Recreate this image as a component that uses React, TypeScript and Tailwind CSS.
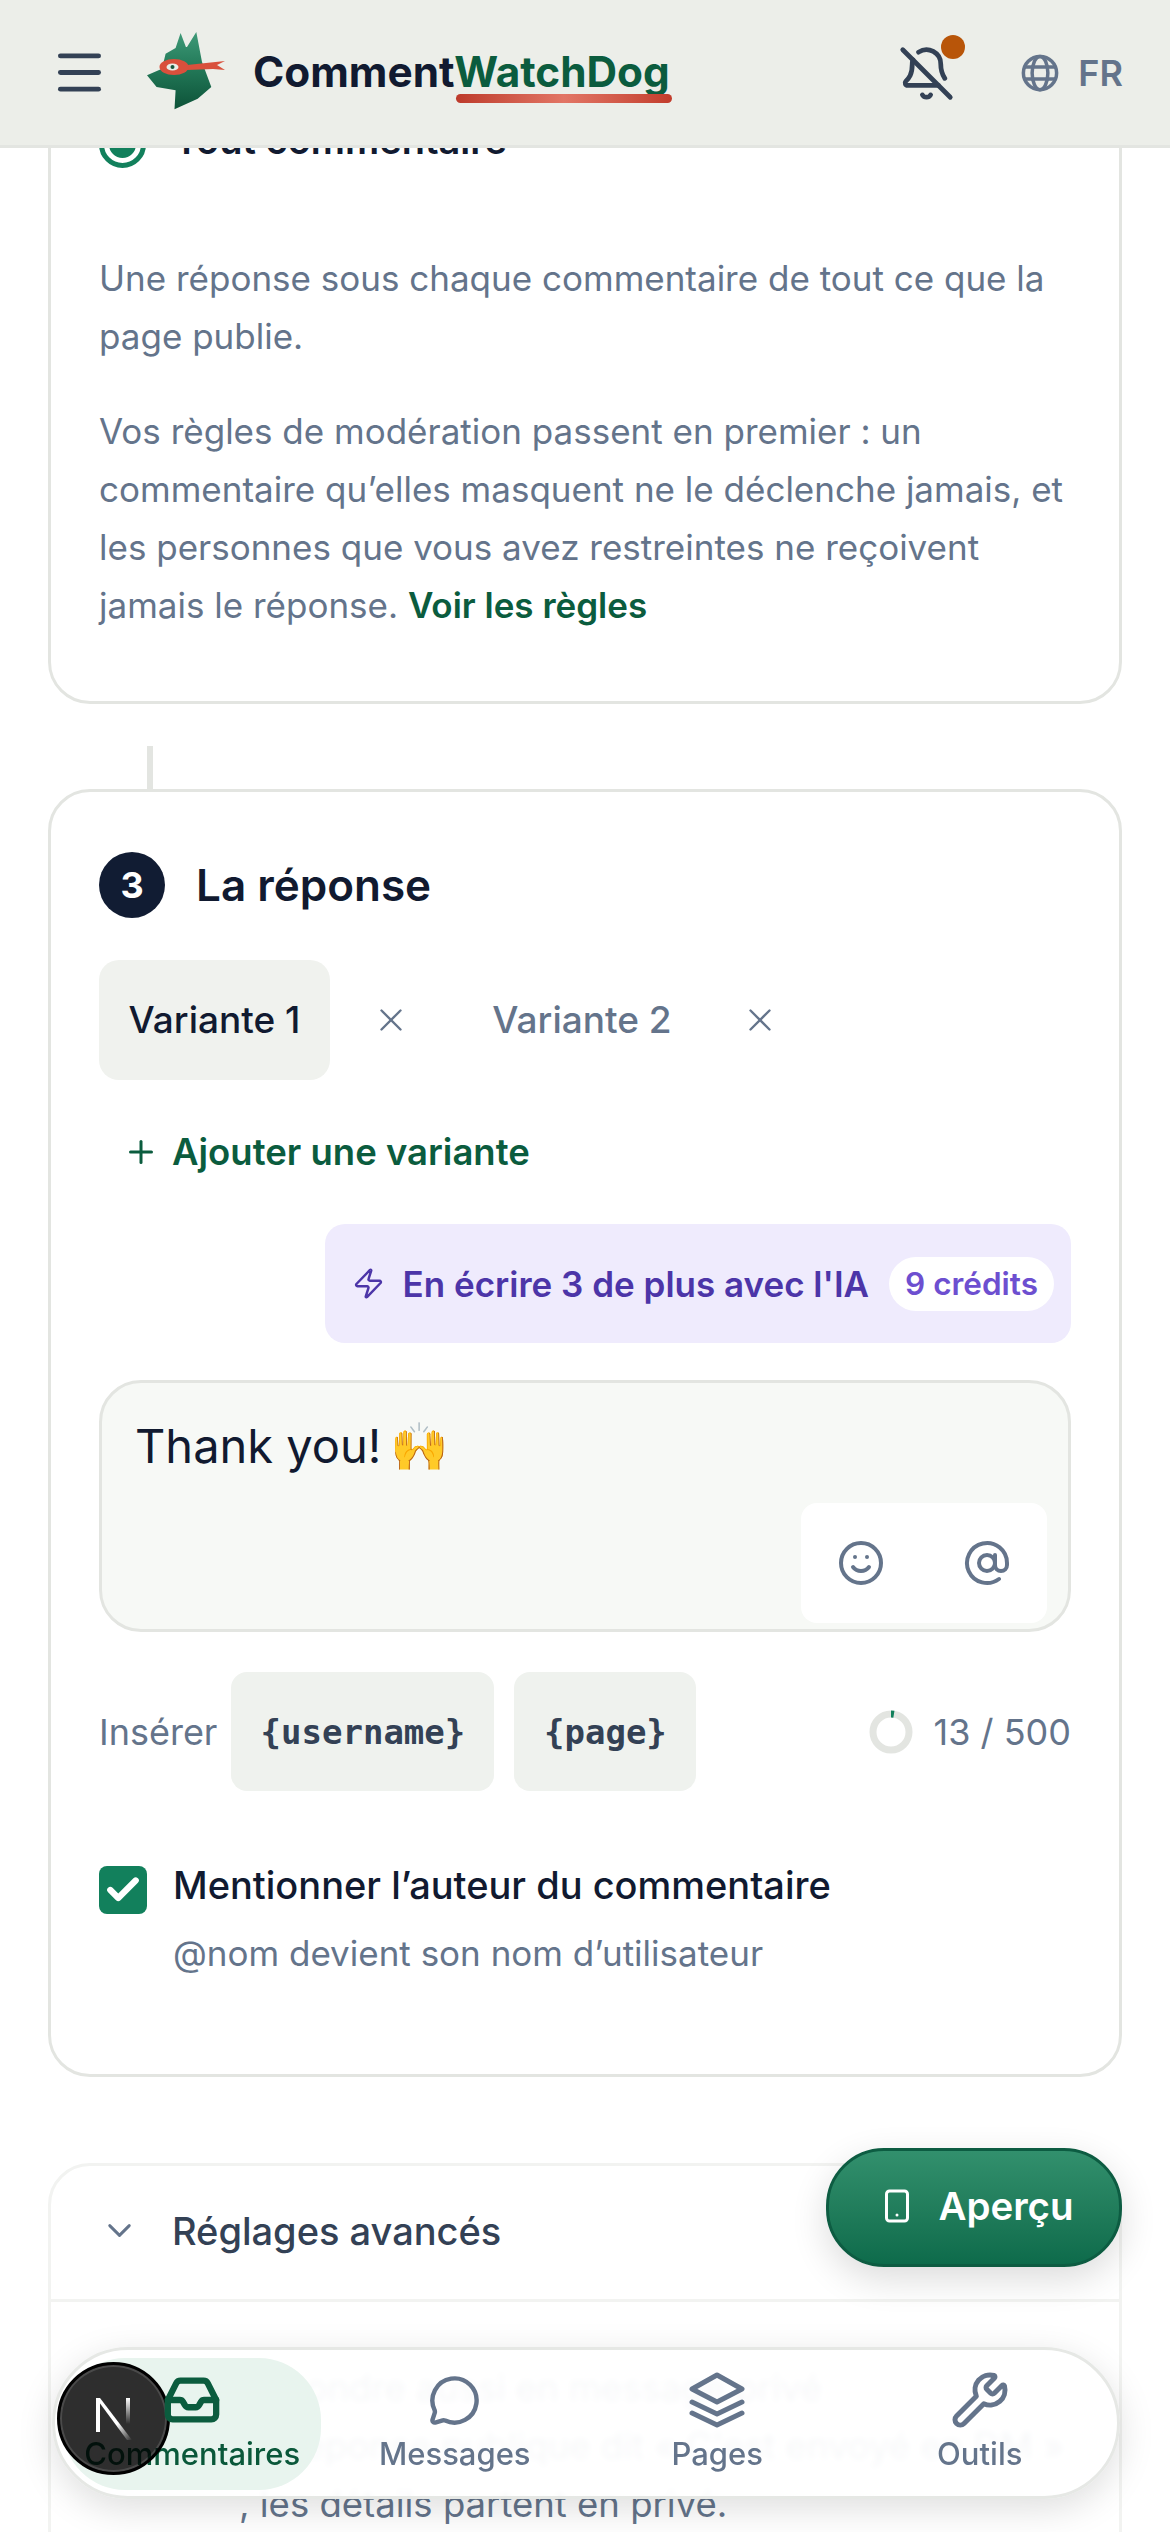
import React from "react";
import { AtSign, BellOff, Check, ChevronDown, Menu, MessageCircle, Plus, Smartphone, Smile, Wrench, X, Zap } from "lucide-react";

const DogLogo = () => (
  <svg width="78" height="78" viewBox="0 0 78 78" fill="none">
    <defs>
      <linearGradient id="dog" x1="0" y1="0" x2="0" y2="1">
        <stop offset="0" stopColor="#3f9a78" />
        <stop offset="0.45" stopColor="#237a59" />
        <stop offset="1" stopColor="#0d5238" />
      </linearGradient>
    </defs>
    <path
      d="M28.6 16 33.6 1 38.9 15h1.1L49.3 0 55 30 64.3 55 50.7 66.7 27.5 77.3 28.6 58.3 9.6 55 0 43.3 15 36.7 18.6 21.7Z"
      fill="url(#dog)"
    />
    <path d="M40 33 78 29 70 33 78 38 66 37 40 38Z" fill="#d9503c" />
    <ellipse cx="27" cy="35" rx="14.5" ry="8" fill="#d9503c" />
    <ellipse cx="25.5" cy="35" rx="6" ry="3.6" fill="#e8efe9" />
    <circle cx="25.5" cy="35" r="2" fill="#17573f" />
  </svg>
);

const GlobeIcon = () => (
  <svg width="42" height="42" viewBox="0 0 24 24" fill="none" stroke="#64748b" strokeWidth="2">
    <circle cx="12" cy="12" r="9.5" />
    <ellipse cx="12" cy="12" rx="4.5" ry="9.5" />
    <path d="M3.2 8.6h17.6M3.2 15.4h17.6" />
  </svg>
);

const InboxIcon = () => (
  <svg width="58" height="58" viewBox="0 0 24 24" fill="none" stroke="#0b5c3e" strokeWidth="2.6" strokeLinecap="round" strokeLinejoin="round">
    <path d="M5.45 5.11 2 12v6a2 2 0 0 0 2 2h16a2 2 0 0 0 2-2v-6l-3.45-6.89A2 2 0 0 0 16.76 4H7.24a2 2 0 0 0-1.79 1.11z" />
    <path d="M2 12h5c.6 0 1 .3 1.3.8l.7 1.2c.3.6.8 1 1.5 1h3c.7 0 1.2-.4 1.5-1l.7-1.2c.3-.5.7-.8 1.3-.8h5" />
  </svg>
);

const StackIcon = () => (
  <svg width="56" height="56" viewBox="0 0 56 56" fill="none" stroke="#64748b" strokeWidth="5" strokeLinecap="round" strokeLinejoin="round">
    <path d="M28 3 53 17 28 30 3 17Z" />
    <path d="M3 30 28 42 53 30" />
    <path d="M3 41 28 53 53 41" />
  </svg>
);

const NextMark = () => (
  <svg width="38" height="44" viewBox="0 0 38 44">
    <defs>
      <linearGradient id="nd" x1="0" y1="0" x2="1" y2="1">
        <stop offset="0.6" stopColor="#fff" />
        <stop offset="1" stopColor="#fff" stopOpacity="0" />
      </linearGradient>
      <linearGradient id="ns" x1="0" y1="0" x2="0" y2="1">
        <stop offset="0" stopColor="#fff" />
        <stop offset="1" stopColor="#fff" stopOpacity="0" />
      </linearGradient>
    </defs>
    <rect x="1" y="1" width="4" height="34" fill="#fff" />
    <path d="M1 1h4l32 42h-5Z" fill="url(#nd)" />
    <rect x="31" y="1" width="4" height="26" fill="url(#ns)" />
  </svg>
);

const navItems = [
  { label: "Messages", icon: <MessageCircle size={53} strokeWidth={2} color="#64748b" /> },
  { label: "Pages", icon: <StackIcon /> },
  { label: "Outils", icon: <Wrench size={60} strokeWidth={2} color="#64748b" /> },
];

export default function App() {
  return (
    <div className="relative h-[2532px] w-[1170px] overflow-hidden bg-white font-[Inter,sans-serif] text-[36.5px] leading-[58px] text-[#111a30]">
      {/* top bar */}
      <header className="relative z-20 flex h-[148px] items-center border-b-[3px] border-[#e3e5e1] bg-[#eceee9] pl-[51px] pr-[47px]">
        <Menu size={57} color="#334155" strokeWidth={2.1} />
        <div className="ml-[39px] mb-[4px]">
          <DogLogo />
        </div>
        <div className="relative ml-[28px] mb-[2px] text-[42.3px] font-bold leading-[58px]">
          Comment<span className="text-[#0b5c3e]">WatchDog</span>
          <div className="absolute right-[-2px] top-[51px] h-[9px] w-[216px] rounded-full bg-gradient-to-r from-[#bd3a2b] via-[#e27565] to-[#c23c2c]" />
        </div>
        <div className="relative ml-auto mr-[64px] mt-[2px]">
          <BellOff size={57} color="#334155" strokeWidth={2} />
          <div className="absolute right-[-10px] top-[-10px] h-[24px] w-[24px] rounded-full bg-[#b85509]" />
        </div>
        <GlobeIcon />
        <span className="ml-[17px] text-[36px] font-semibold leading-[44px] text-[#64748b]">FR</span>
      </header>

      <main className="px-[48px]">
        {/* card 2, scrolled under the bar */}
        <section className="mt-[-88px] rounded-[42px] border-[3px] border-[#e3e5e1] pb-[67px] pl-[48px] pr-[49px] pt-[58px]">
          <div className="flex h-[47px] items-center gap-[28px]">
            <div className="flex h-[47px] w-[47px] items-center justify-center rounded-full border-[5px] border-[#12805c]">
              <div className="h-[27px] w-[27px] rounded-full bg-[#12805c]" />
            </div>
            <span className="mb-[10px] text-[38px] font-semibold">Tout commentaire</span>
          </div>
          <p className="mt-[81px] text-[35px] text-[#64748b]">Une réponse sous chaque commentaire de tout ce que la page publie.</p>
          <p className="mt-[37px] text-[35px] text-[#64748b]">
            Vos règles de modération passent en premier : un commentaire qu’elles masquent ne le déclenche jamais, et les personnes que vous avez restreintes ne reçoivent jamais le réponse.{" "}
            <span className="font-semibold text-[#0b5c3e]">Voir les règles</span>
          </p>
        </section>

        <div className="ml-[99px] mt-[42px] h-[43px] w-[6px] bg-[#e3e5e1]" />

        {/* card 3 */}
        <section className="rounded-[42px] border-[3px] border-[#e3e5e1] pb-[94px] pl-[48px] pr-[48px] pt-[60px]">
          <div className="flex items-center gap-[31px]">
            <div className="flex h-[66px] w-[66px] items-center justify-center rounded-full bg-[#111c33] text-[36px] font-bold text-white">3</div>
            <h2 className="text-[44px] font-semibold">La réponse</h2>
          </div>

          <div className="mt-[42px] flex items-center text-[37px]">
            <div className="flex h-[120px] w-[231px] items-center justify-center rounded-[20px] bg-[#f0f2ee] font-medium">Variante 1</div>
            <div className="flex h-[120px] w-[122px] items-center justify-center text-[#64748b]">
              <X size={38} strokeWidth={1.5} />
            </div>
            <div className="ml-[12px] flex h-[120px] w-[236px] items-center justify-center font-medium text-[#64748b]">Variante 2</div>
            <div className="flex h-[120px] w-[120px] items-center justify-center text-[#64748b]">
              <X size={38} strokeWidth={1.5} />
            </div>
          </div>

          <div className="mt-[42px] flex h-[60px] items-center gap-[13px] pl-[24px] font-semibold text-[#0b5c3e]">
            <Plus size={36} strokeWidth={2} />
            Ajouter une variante
          </div>

          <div className="mt-[42px] flex justify-end">
            <div className="flex h-[119px] items-center rounded-[20px] bg-[#efebfd] pl-[27px] pr-[17px] text-[35px] font-semibold text-[#4c35a8]">
              <Zap size={33} strokeWidth={1.8} />
              <span className="ml-[18px]">En écrire 3 de plus avec l'IA</span>
              <span className="ml-[20px] flex h-[54px] items-center rounded-full bg-white px-[16px] text-[31.5px] text-[#6d4fd0]">9 crédits</span>
            </div>
          </div>

          <div className="relative mt-[37px] h-[252px] rounded-[42px] border-[3px] border-[#e3e5e1] bg-[#f7f9f6] pl-[33px] pt-[27px] text-[47px] leading-[72px]">
            Thank you! <span className="ml-[-5px]">🙌</span>
            <div className="absolute bottom-[6px] right-[21px] flex h-[120px] items-center gap-[6px] rounded-[16px] bg-white text-[#64748b]">
              <div className="flex h-[120px] w-[120px] items-center justify-center">
                <Smile size={48} strokeWidth={2} />
              </div>
              <div className="flex h-[120px] w-[120px] items-center justify-center">
                <AtSign size={48} strokeWidth={2} />
              </div>
            </div>
          </div>

          <div className="mt-[40px] flex h-[119px] items-center text-[36px] text-[#64748b]">
            <span>Insérer</span>
            <div className="ml-[14px] flex h-[119px] w-[263px] items-center justify-center rounded-[16px] bg-[#eff2ee] font-['DejaVu_Sans_Mono',monospace] text-[34px] font-bold text-[#334155]">
              {"{username}"}
            </div>
            <div className="ml-[20px] flex h-[119px] w-[182px] items-center justify-center rounded-[16px] bg-[#eff2ee] font-['DejaVu_Sans_Mono',monospace] text-[34px] font-bold text-[#334155]">
              {"{page}"}
            </div>
            <svg width="44" height="44" viewBox="0 0 44 44" className="ml-auto -rotate-90">
              <circle cx="22" cy="22" r="18" fill="none" stroke="#e3e5e1" strokeWidth="7" />
              <circle cx="22" cy="22" r="18" fill="none" stroke="#12805c" strokeWidth="7" strokeDasharray="3 110" />
            </svg>
            <span className="ml-[21px]">13 / 500</span>
          </div>

          <div className="mt-[65px] flex items-start gap-[26px]">
            <div className="mt-[10px] flex h-[48px] w-[48px] shrink-0 items-center justify-center rounded-[8px] bg-[#12805c] text-white">
              <Check size={38} strokeWidth={4} />
            </div>
            <div>
              <div className="text-[38px] font-medium">Mentionner l’auteur du commentaire</div>
              <div className="mt-[12px] text-[35px] leading-[54px] text-[#64748b]">@nom devient son nom d’utilisateur</div>
            </div>
          </div>
        </section>

        {/* advanced settings */}
        <section className="mt-[86px] rounded-[42px] border-[3px] border-[#f2f3f1]">
          <div className="flex h-[133px] items-center gap-[33px] pb-[4px] pl-[49px] text-[38px] font-medium text-[#334155]">
            <ChevronDown size={39} strokeWidth={1.8} color="#64748b" />
            Réglages avancés
          </div>
          <div className="border-t-[3px] border-[#f2f3f1] pb-[60px] pl-[188px] pr-[40px] pt-[57px] text-[#64748b]">
            <p>Répondre aussi en message privé</p>
            <p className="whitespace-nowrap">La réponse publique dit « C'est envoyé en DM »</p>
            <p>, les détails partent en privé.</p>
          </div>
        </section>
      </main>

      {/* floating preview button */}
      <button className="absolute left-[826px] top-[2148px] z-10 flex h-[119px] w-[296px] items-center justify-center gap-[23px] rounded-[58px] border-[3px] border-[#0d5c42] bg-gradient-to-b from-[#32906d] to-[#0d6b4b] pb-[4px] pl-[5px] text-[38.5px] font-semibold text-white shadow-[0_12px_36px_rgba(0,0,0,0.14)]">
        <Smartphone size={36} strokeWidth={2} />
        Aperçu
      </button>

      {/* bottom nav */}
      <nav className="absolute left-[52px] top-[2347px] z-10 h-[152px] w-[1068px] rounded-[76px] border-[3px] border-[#e6e8e5] bg-white/[0.94] shadow-[0_10px_36px_rgba(0,0,0,0.13)] backdrop-blur-[3px]">
        <div className="absolute left-[8px] top-[8px] h-[132px] w-[258px] rounded-[62px] bg-[#e8f4ee]" />
        <div className="absolute left-[2px] top-[12px] flex h-[113px] w-[113px] items-center justify-center rounded-full border-[3px] border-black bg-[#2e2e2e] shadow-[inset_0_0_0_2px_#4a4a4a]">
          <NextMark />
        </div>
        <div className="relative grid h-full grid-cols-4 pl-[6px] pr-[6px] pt-[17px]">
          <div className="flex flex-col items-center">
            <div className="flex h-[66px] items-center"><InboxIcon /></div>
            <span className="mt-[-2px] text-[31px] font-medium leading-[46px] text-[#0b5c3e] mix-blend-multiply">Commentaires</span>
          </div>
          {navItems.map((item) => (
            <div key={item.label} className="flex flex-col items-center">
              <div className="flex h-[66px] items-center">{item.icon}</div>
              <span className="mt-[-2px] text-[31px] font-medium leading-[46px] text-[#64748b]">{item.label}</span>
            </div>
          ))}
        </div>
      </nav>
    </div>
  );
}
